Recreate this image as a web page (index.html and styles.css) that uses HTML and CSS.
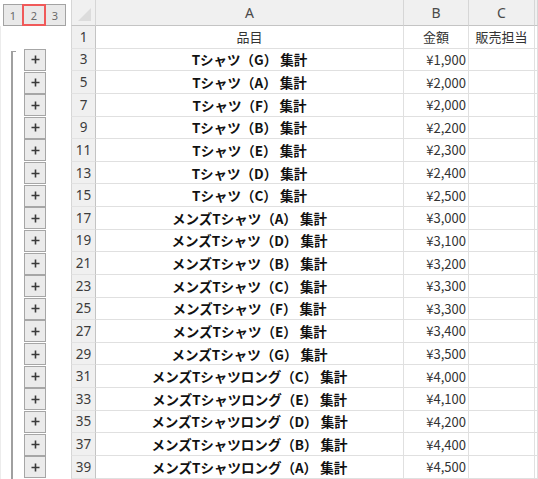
FILE: index.html
```html
<!DOCTYPE html>
<html lang="ja">
<head>
<meta charset="utf-8">
<title>集計</title>
<link rel="stylesheet" href="styles.css">
</head>
<body>
<div class="app">
  <div class="outline">
    <div class="levels">
      <div class="level">1</div>
      <div class="level selected">2</div>
      <div class="level">3</div>
    </div>
    <div class="outline-body">
      <div class="bracket"></div>
      <div class="plus-col">
        <div class="plus-row"><div class="plus"><svg viewBox="0 0 9 9" width="9" height="9"><path d="M4.5 0.5V8.5M0.5 4.5H8.5" stroke="#3a3a3a" stroke-width="1.6"/></svg></div></div>
        <div class="plus-row"><div class="plus"><svg viewBox="0 0 9 9" width="9" height="9"><path d="M4.5 0.5V8.5M0.5 4.5H8.5" stroke="#3a3a3a" stroke-width="1.6"/></svg></div></div>
        <div class="plus-row"><div class="plus"><svg viewBox="0 0 9 9" width="9" height="9"><path d="M4.5 0.5V8.5M0.5 4.5H8.5" stroke="#3a3a3a" stroke-width="1.6"/></svg></div></div>
        <div class="plus-row"><div class="plus"><svg viewBox="0 0 9 9" width="9" height="9"><path d="M4.5 0.5V8.5M0.5 4.5H8.5" stroke="#3a3a3a" stroke-width="1.6"/></svg></div></div>
        <div class="plus-row"><div class="plus"><svg viewBox="0 0 9 9" width="9" height="9"><path d="M4.5 0.5V8.5M0.5 4.5H8.5" stroke="#3a3a3a" stroke-width="1.6"/></svg></div></div>
        <div class="plus-row"><div class="plus"><svg viewBox="0 0 9 9" width="9" height="9"><path d="M4.5 0.5V8.5M0.5 4.5H8.5" stroke="#3a3a3a" stroke-width="1.6"/></svg></div></div>
        <div class="plus-row"><div class="plus"><svg viewBox="0 0 9 9" width="9" height="9"><path d="M4.5 0.5V8.5M0.5 4.5H8.5" stroke="#3a3a3a" stroke-width="1.6"/></svg></div></div>
        <div class="plus-row"><div class="plus"><svg viewBox="0 0 9 9" width="9" height="9"><path d="M4.5 0.5V8.5M0.5 4.5H8.5" stroke="#3a3a3a" stroke-width="1.6"/></svg></div></div>
        <div class="plus-row"><div class="plus"><svg viewBox="0 0 9 9" width="9" height="9"><path d="M4.5 0.5V8.5M0.5 4.5H8.5" stroke="#3a3a3a" stroke-width="1.6"/></svg></div></div>
        <div class="plus-row"><div class="plus"><svg viewBox="0 0 9 9" width="9" height="9"><path d="M4.5 0.5V8.5M0.5 4.5H8.5" stroke="#3a3a3a" stroke-width="1.6"/></svg></div></div>
        <div class="plus-row"><div class="plus"><svg viewBox="0 0 9 9" width="9" height="9"><path d="M4.5 0.5V8.5M0.5 4.5H8.5" stroke="#3a3a3a" stroke-width="1.6"/></svg></div></div>
        <div class="plus-row"><div class="plus"><svg viewBox="0 0 9 9" width="9" height="9"><path d="M4.5 0.5V8.5M0.5 4.5H8.5" stroke="#3a3a3a" stroke-width="1.6"/></svg></div></div>
        <div class="plus-row"><div class="plus"><svg viewBox="0 0 9 9" width="9" height="9"><path d="M4.5 0.5V8.5M0.5 4.5H8.5" stroke="#3a3a3a" stroke-width="1.6"/></svg></div></div>
        <div class="plus-row"><div class="plus"><svg viewBox="0 0 9 9" width="9" height="9"><path d="M4.5 0.5V8.5M0.5 4.5H8.5" stroke="#3a3a3a" stroke-width="1.6"/></svg></div></div>
        <div class="plus-row"><div class="plus"><svg viewBox="0 0 9 9" width="9" height="9"><path d="M4.5 0.5V8.5M0.5 4.5H8.5" stroke="#3a3a3a" stroke-width="1.6"/></svg></div></div>
        <div class="plus-row"><div class="plus"><svg viewBox="0 0 9 9" width="9" height="9"><path d="M4.5 0.5V8.5M0.5 4.5H8.5" stroke="#3a3a3a" stroke-width="1.6"/></svg></div></div>
        <div class="plus-row"><div class="plus"><svg viewBox="0 0 9 9" width="9" height="9"><path d="M4.5 0.5V8.5M0.5 4.5H8.5" stroke="#3a3a3a" stroke-width="1.6"/></svg></div></div>
        <div class="plus-row"><div class="plus"><svg viewBox="0 0 9 9" width="9" height="9"><path d="M4.5 0.5V8.5M0.5 4.5H8.5" stroke="#3a3a3a" stroke-width="1.6"/></svg></div></div>
        <div class="plus-row"><div class="plus"><svg viewBox="0 0 9 9" width="9" height="9"><path d="M4.5 0.5V8.5M0.5 4.5H8.5" stroke="#3a3a3a" stroke-width="1.6"/></svg></div></div>
      </div>
    </div>
  </div>
  <div class="sheet">
    <div class="hdr corner"><svg class="tri" viewBox="0 0 13 13" width="13" height="13"><path d="M13 0V13H0Z" fill="#dcdcdc"/></svg></div>
    <div class="hdr col">A</div>
    <div class="hdr col">B</div>
    <div class="hdr col">C</div>
    <div class="hdr col"></div>

    <div class="rn">1</div><div class="c ctr">品目</div><div class="c ctr">金額</div><div class="c ctr">販売担当</div><div class="c"></div>
    <div class="rn">3</div><div class="c item">Tシャツ（G） 集計</div><div class="c num">¥1,900</div><div class="c"></div><div class="c"></div>
    <div class="rn">5</div><div class="c item">Tシャツ（A） 集計</div><div class="c num">¥2,000</div><div class="c"></div><div class="c"></div>
    <div class="rn">7</div><div class="c item">Tシャツ（F） 集計</div><div class="c num">¥2,000</div><div class="c"></div><div class="c"></div>
    <div class="rn">9</div><div class="c item">Tシャツ（B） 集計</div><div class="c num">¥2,200</div><div class="c"></div><div class="c"></div>
    <div class="rn">11</div><div class="c item">Tシャツ（E） 集計</div><div class="c num">¥2,300</div><div class="c"></div><div class="c"></div>
    <div class="rn">13</div><div class="c item">Tシャツ（D） 集計</div><div class="c num">¥2,400</div><div class="c"></div><div class="c"></div>
    <div class="rn">15</div><div class="c item">Tシャツ（C） 集計</div><div class="c num">¥2,500</div><div class="c"></div><div class="c"></div>
    <div class="rn">17</div><div class="c item">メンズTシャツ（A） 集計</div><div class="c num">¥3,000</div><div class="c"></div><div class="c"></div>
    <div class="rn">19</div><div class="c item">メンズTシャツ（D） 集計</div><div class="c num">¥3,100</div><div class="c"></div><div class="c"></div>
    <div class="rn">21</div><div class="c item">メンズTシャツ（B） 集計</div><div class="c num">¥3,200</div><div class="c"></div><div class="c"></div>
    <div class="rn">23</div><div class="c item">メンズTシャツ（C） 集計</div><div class="c num">¥3,300</div><div class="c"></div><div class="c"></div>
    <div class="rn">25</div><div class="c item">メンズTシャツ（F） 集計</div><div class="c num">¥3,300</div><div class="c"></div><div class="c"></div>
    <div class="rn">27</div><div class="c item">メンズTシャツ（E） 集計</div><div class="c num">¥3,400</div><div class="c"></div><div class="c"></div>
    <div class="rn">29</div><div class="c item">メンズTシャツ（G） 集計</div><div class="c num">¥3,500</div><div class="c"></div><div class="c"></div>
    <div class="rn">31</div><div class="c item">メンズTシャツロング（C） 集計</div><div class="c num">¥4,000</div><div class="c"></div><div class="c"></div>
    <div class="rn">33</div><div class="c item">メンズTシャツロング（E） 集計</div><div class="c num">¥4,100</div><div class="c"></div><div class="c"></div>
    <div class="rn">35</div><div class="c item">メンズTシャツロング（D） 集計</div><div class="c num">¥4,200</div><div class="c"></div><div class="c"></div>
    <div class="rn">37</div><div class="c item">メンズTシャツロング（B） 集計</div><div class="c num">¥4,400</div><div class="c"></div><div class="c"></div>
    <div class="rn">39</div><div class="c item">メンズTシャツロング（A） 集計</div><div class="c num">¥4,500</div><div class="c"></div><div class="c"></div>
  </div>
</div>
</body>
</html>
```

FILE: styles.css
```css
* { box-sizing: border-box; }
html, body {
  margin: 0;
  padding: 0;
  background: #ffffff;
}
body {
  width: 538px;
  height: 479px;
  overflow: hidden;
  font-family: "Noto Sans CJK JP", "Noto Sans", sans-serif;
  color: #222;
}
.app {
  display: flex;
  width: 538px;
  height: 479px;
}
.outline {
  width: 71px;
  flex: none;
  display: flex;
  flex-direction: column;
  background: #ffffff;
}
.levels {
  height: 26px;
  padding: 4px 0 0 3px;
  display: flex;
  align-items: flex-start;
}
.level {
  height: 22px;
  width: 21px;
  background: #e9e9e9;
  border: 1px solid #a3a3a3;
  border-left-width: 0;
  display: flex;
  align-items: center;
  justify-content: center;
  font-family: "Noto Sans", sans-serif;
  font-size: 11px;
  color: #6a6a6a;
}
.level:first-child {
  border-left-width: 1px;
  width: 20px;
}
.level.selected {
  width: 24px;
  border: 2px solid #f05a5a;
  margin-left: -1px;
  margin-right: -1px;
  position: relative;
}
.outline-body {
  flex: 1;
  display: flex;
  border-left: 1px solid #ececec;
}
.bracket {
  margin-left: 10px;
  margin-top: 25px;
  width: 5px;
  border-left: 2px solid #a0a0a0;
  border-top: 1px solid #a0a0a0;
}
.plus-col {
  margin-left: 8px;
  padding-top: 22.63px;
  display: flex;
  flex-direction: column;
}
.plus-row {
  height: 22.63px;
  display: flex;
  align-items: center;
}
.plus {
  width: 22px;
  height: 22px;
  background: #ebebeb;
  border: 1px solid #a6a6a6;
  display: flex;
  align-items: center;
  justify-content: center;
}
.plus svg { display: block; }

.sheet {
  flex: 1;
  display: grid;
  grid-template-columns: 25px 308px 65px 66px 1fr;
  grid-template-rows: 26px;
  grid-auto-rows: 22.63px;
  align-content: start;
}
.hdr {
  background: #f0f0f0;
  border-bottom: 1px solid #c4c4c4;
  border-right: 1px solid #d6d6d6;
  display: flex;
  align-items: center;
  justify-content: center;
  font-family: "Noto Sans", sans-serif;
  font-size: 14px;
  color: #4a4a4a;
}
.corner {
  border-left: 1px solid #d6d6d6;
  justify-content: flex-end;
  align-items: flex-end;
  padding: 0 4px 4px 0;
}
.corner .tri { display: block; }
.rn {
  background: #f0f0f0;
  border-left: 1px solid #d6d6d6;
  border-right: 1px solid #c4c4c4;
  border-bottom: 1px solid #e2e2e2;
  display: flex;
  align-items: center;
  justify-content: center;
  font-family: "Noto Sans", sans-serif;
  font-size: 13.5px;
  color: #3c3c3c;
}
.c {
  border-right: 1px solid #e0e0e0;
  border-bottom: 1px solid #e0e0e0;
  display: flex;
  align-items: center;
  font-size: 13px;
  color: #333;
  white-space: nowrap;
  overflow: hidden;
}
.ctr { justify-content: center; }
.item {
  justify-content: center;
  font-weight: 700;
  font-size: 13.5px;
  color: #111;
}
.num {
  justify-content: flex-end;
  padding-right: 2px;
  font-size: 13px;
  color: #333;
}
```
